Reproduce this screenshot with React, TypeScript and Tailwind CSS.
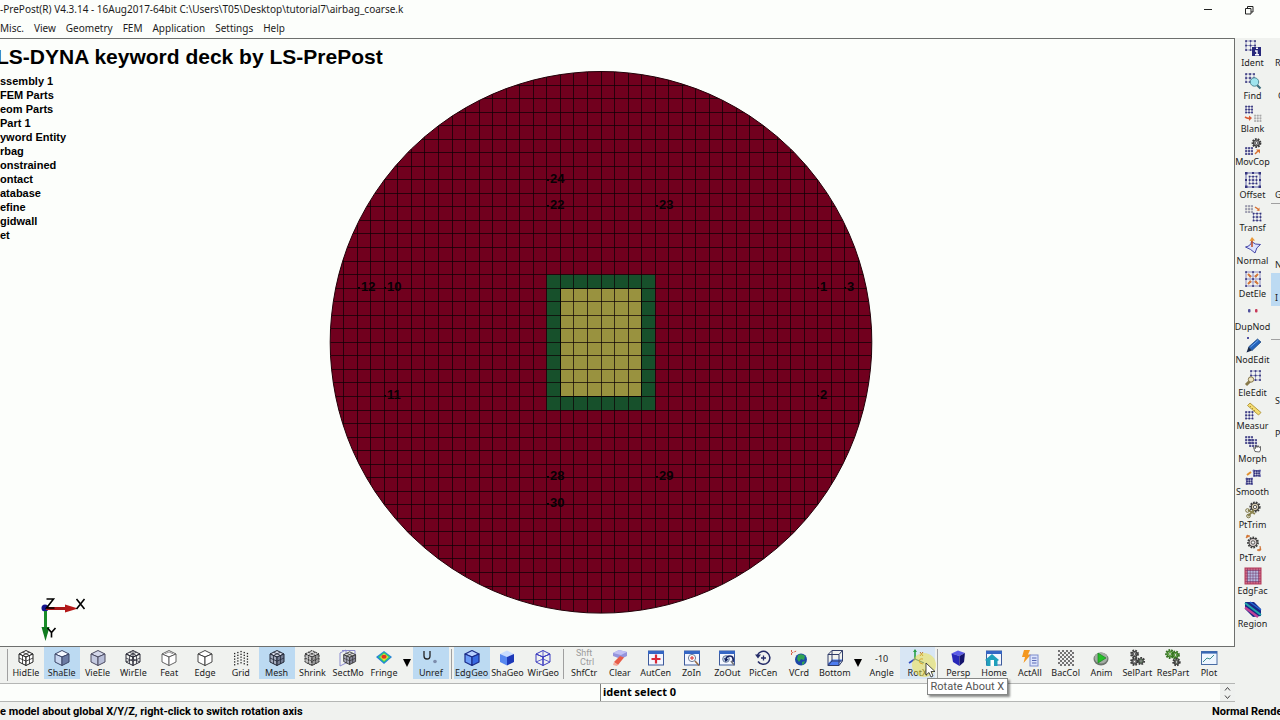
import React from "react";

type IconProps = { children: React.ReactNode };
const Ico = ({ children }: IconProps) => (
  <svg viewBox="0 0 18 18" className="h-[18px] w-[18px] shrink-0" fill="none" aria-hidden="true">
    {children}
  </svg>
);

/* ---------- shared glyphs ---------- */

type CubeProps = { top?: string; left?: string; right?: string; line?: string; grid?: boolean; hidden?: boolean; dash?: string; w?: number };
const Cube = ({ top = "none", left = "none", right = "none", line = "#333", grid, hidden, dash, w = 1 }: CubeProps) => (
  <g stroke={line} strokeWidth={w} strokeLinejoin="round" strokeDasharray={dash}>
    <path d="M2 5L9 1.5L16 5L9 8Z" fill={top} />
    <path d="M2 5L9 8V16.5L2 13Z" fill={left} />
    <path d="M16 5L9 8V16.5L16 13Z" fill={right} />
    {grid && (
      <path d="M5.500 3.200L12.500 6.500V15M12.500 3.200L5.500 6.500V15M2 9L9 12.200L16 9" strokeWidth={w * 0.8} />
    )}
    {hidden && <path d="M9 1.5V10M9 10L2 13M9 10L16 13" strokeWidth={w * 0.8} />}
  </g>
);

type GridProps = { x: number; y: number; s: number; n?: number; line?: string; dot?: string };
const NodeGrid = ({ x, y, s, n = 2, line = "#8484b8", dot = "#34347c" }: GridProps) => {
  const ks = Array.from({ length: n + 1 }, (_, i) => (i * s) / n);
  return (
    <g>
      {ks.map((k) => (
        <path key={k} d={`M${x + k} ${y}v${s}M${x} ${y + k}h${s}`} stroke={line} strokeWidth="0.8" />
      ))}
      {ks.map((a) => ks.map((b) => <rect key={`${a}-${b}`} x={x + a - 0.8} y={y + b - 0.8} width="1.7" height="1.7" fill={dot} />))}
    </g>
  );
};

const Gear = ({ x, y, r, c = "#3c3c3c", f = "#aaa" }: { x: number; y: number; r: number; c?: string; f?: string }) => (
  <g>
    <circle cx={x} cy={y} r={r} stroke={c} strokeWidth="1.8" strokeDasharray="1.7 1.1" />
    <circle cx={x} cy={y} r={r - 1} fill={f} stroke={c} strokeWidth="1.1" />
    <circle cx={x} cy={y} r={r * 0.35} fill="#f4f4f4" stroke={c} strokeWidth="0.8" />
  </g>
);

const Arrow = ({ d }: { d: string }) => <path d={d} fill="#e07a2c" stroke="#c05818" strokeWidth="0.5" />;

const Win = ({ children }: IconProps) => (
  <Ico>
    <rect x="1.5" y="2" width="15" height="14" fill="#f4f7ff" stroke="#3c5a9c" />
    <path d="M1 3.5h16" stroke="#3566c4" strokeWidth="3" />
    {children}
  </Ico>
);

/* ---------- right-hand tools ---------- */

const sideTools: { name: string; icon: React.ReactNode }[] = [
  { name: "Ident", icon: <Ico><NodeGrid x={2} y={2} s={9} /><rect x="8" y="8" width="9" height="9" fill="#28287c" /><path d="M12 9.300h2M11 12h2v3.500M11 15.700h4" stroke="#fff" strokeWidth="1.4" /></Ico> },
  { name: "Find", icon: <Ico><NodeGrid x={2} y={2} s={8} /><path d="M13 13l3.5 3.5" stroke="#3d6d7d" strokeWidth="2.2" /><circle cx="10.500" cy="10" r="4.200" fill="#9fe4ee" stroke="#548b98" /></Ico> },
  { name: "Blank", icon: <Ico><NodeGrid x={2} y={1.500} s={6} /><path d="M1 12q3 2 5 1" stroke="#d85830" strokeWidth="1.600" /><path d="M5 10.500l3 2.500-3 3z" fill="#d85830" /><NodeGrid x={11} y={10.500} s={5.500} line="#ccc" dot="#aaa" /></Ico> },
  { name: "MovCop", icon: <Ico><Gear x={12.5} y={5} r={4} /><NodeGrid x={2} y={10} s={6} /><path d="M11 16l3-3" stroke="#d87030" strokeWidth="1.500" /><path d="M12 11.500h4v4z" fill="#d87030" /></Ico> },
  { name: "Offset", icon: <Ico><rect x="2" y="2" width="14" height="14" stroke="#5f62aa" /><NodeGrid x={5.5} y={5.5} s={7} /><g fill="#34347e"><path d="M1 1h2.500v2.500H1zM14.500 1H17v2.500h-2.500zM1 14.500h2.500V17H1zM14.500 14.500H17V17h-2.500zM8 1h2v2H8zM8 15h2v2H8zM1 8h2v2H1zM15 8h2v2h-2z" /></g></Ico> },
  { name: "Transf", icon: <Ico><NodeGrid x={2} y={2} s={6} line="#bbb" dot="#9090a8" /><path d="M11 3l3 2" stroke="#d87030" strokeWidth="1.500" /><path d="M12.500 6.500l3-3v3.500z" fill="#d87030" /><NodeGrid x={9.5} y={9.5} s={7} /></Ico> },
  { name: "Normal", icon: <Ico><path d="M1.500 10Q7 9 7.500 4.500Q11 8 16.500 7.500Q12 10 11 16Q7 12 1.500 10Z" fill="#dbe1ff" stroke="#4545a8" /><path d="M8 10V3" stroke="#c04820" strokeWidth="1.500" /><path d="M5.500 4L8 0l3 3.500z" fill="#e89838" /></Ico> },
  { name: "DetEle", icon: <Ico><NodeGrid x={2} y={2} s={14} n={2} line="#7474b8" /><NodeGrid x={6} y={6} s={6} n={1} line="#a8a8d0" /><path d="M7 7L4 4M11 7l3-3M7 11l-3 3M11 11l3 3" stroke="#d87838" strokeWidth="2" /></Ico> },
  { name: "DupNod", icon: <Ico><rect x="4" y="6" width="2.500" height="3.500" rx="1" fill="#50509c" /><rect x="11" y="6" width="2.500" height="3.500" rx="1" fill="#c83858" /></Ico> },
  { name: "NodEdit", icon: <Ico><rect x="3" y="1" width="2" height="2" fill="#5050a0" /><path d="M4.500 11L13.500 3l3.500 3L8 14.500Z" fill="#2464bc" stroke="#174078" strokeWidth="0.7" /><path d="M4.500 11L8 14.500l-5.500 2z" fill="#182848" /><path d="M6.500 11l8-7" stroke="#6ca6ec" /></Ico> },
  { name: "EleEdit", icon: <Ico><NodeGrid x={7} y={2} s={9} /><path d="M2 16l4-4" stroke="#88794a" strokeWidth="3" /><circle cx="7" cy="10.500" r="2.700" fill="#eee4c0" stroke="#85754a" /></Ico> },
  { name: "Measur", icon: <Ico><path d="M3.500 3.500L6 1l11 9.500-2.500 2.500Z" fill="#f4dc70" stroke="#a48828" strokeWidth="0.8" /><path d="M6 5l1-1M8 7l1-1M10 9l1-1" stroke="#98802c" strokeWidth="0.8" /><NodeGrid x={2} y={10} s={6.5} /></Ico> },
  { name: "Morph", icon: <Ico><NodeGrid x={2} y={2} s={6} /><NodeGrid x={6} y={5} s={6} /><path d="M11 16.500l-1.500-4 2 1v-3l1.500 2 1-2 1 2 1.500-1v3.500l-1 2z" fill="#fff" stroke="#444" strokeWidth="0.8" /></Ico> },
  { name: "Smooth", icon: <Ico><path d="M9 2q4 1.500 7.500 0q-1.500 3 0 6.500q-3-1.500-7 0q1-3-.5-6.500zM2 10q3 1.500 6.500 0q-1.500 3 0 6.500q-3-1.500-6.500 0q1-3 0-6.500z" stroke="#6666ac" /><NodeGrid x={10.500} y={3} s={4.5} /><NodeGrid x={3} y={11} s={4.5} /><path d="M3 7l4-3" stroke="#e09030" strokeWidth="2" /></Ico> },
  { name: "PtTrim", icon: <Ico><Gear x={11} y={6} r={4.7} f="#d8ccb0" /><path d="M10 9l-6 6M4 9l7 4" stroke="#8c8550" strokeWidth="1.800" /><circle cx="3.500" cy="9.500" r="1.800" stroke="#7a7340" /><circle cx="4.500" cy="15" r="1.800" stroke="#7a7340" /></Ico> },
  { name: "PtTrav", icon: <Ico><Gear x={9} y={8.5} r={5} f="#d8d0d0" /><Arrow d="M2 4l1-3 3 1-2 1z" /><Arrow d="M13 16l3-1v-3l1 4-2 1z" /></Ico> },
  { name: "EdgFac", icon: <Ico><rect x="1" y="1" width="16" height="16" fill="#cf6884" /><rect x="3.500" y="3.500" width="11" height="11" fill="#b6bbdf" /><path d="M1 3.500h16M1 6.200h16M1 9h16M1 11.800h16M1 14.500h16M3.500 1v16M6.200 1v16M9 1v16M11.800 1v16M14.500 1v16" stroke="#6c2c60" strokeWidth="0.5" /><rect x="1" y="1" width="16" height="16" stroke="#b43858" /></Ico> },
  { name: "Region", icon: <Ico><path d="M1 2h9l7 7v7l-8 1-8-8z" fill="#172887" /><path d="M1 3l16 12" stroke="#20a8a8" strokeWidth="2" /><path d="M1 7.500L14 17" stroke="#c04098" strokeWidth="2.200" /><path d="M6 2l11 8" stroke="#2468d4" strokeWidth="1.500" /></Ico> },
];

type Slot = { text?: string; rule?: boolean; on?: boolean; far?: boolean };
const edgeSlots: Slot[] = [
  { text: "R" }, { text: "C", far: true }, {}, {}, { text: "G" },
  { rule: true }, {}, { text: "N" }, { text: "I", on: true }, {}, { rule: true }, {}, { text: "S" }, { text: "P" },
];

/* ---------- bottom toolbar ---------- */

type Tool = { name: string; icon: React.ReactNode; on?: boolean; hot?: boolean };
type Entry = Tool | "drop" | "sep";

const tools: Entry[] = [
  { name: "HidEle", icon: <Ico><Cube top="#fff" left="#fff" right="#fff" grid line="#222" /></Ico> },
  { name: "ShaEle", on: true, icon: <Ico><Cube top="#f4f8ff" left="#c8d6f0" right="#6c7ba4" line="#3c4668" /></Ico> },
  { name: "VieEle", icon: <Ico><Cube top="#d4d8ea" left="#c4cae0" right="#b8bed8" line="#4c4c62" /></Ico> },
  { name: "WirEle", icon: <Ico><Cube grid hidden line="#2c2c38" /></Ico> },
  { name: "Feat", icon: <Ico><Cube top="#fff" left="#fff" right="#fff" line="#555" w={0.9} /><path d="M5 4.800l4-1.800 4 1.800" stroke="#777" strokeWidth="0.8" /></Ico> },
  { name: "Edge", icon: <Ico><Cube top="#fff" left="#fff" right="#fff" line="#333" w={0.9} /></Ico> },
  { name: "Grid", icon: <Ico>{Array.from({ length: 25 }, (_, i) => <rect key={i} x={2 + (i % 5) * 3.2} y={2.5 + Math.floor(i / 5) * 2.8 + [1.4, 0.4, -0.6, 0.4, 1.4][i % 5]} width="1.300" height="1.300" fill="#222" />)}</Ico> },
  { name: "Mesh", on: true, icon: <Ico><Cube top="#d8dce8" left="#a4acbe" right="#747c92" grid line="#222838" /></Ico> },
  { name: "Shrink", icon: <Ico><Cube top="#d6d6d6" left="#c0c0c0" right="#999" grid dash="2.200 0.7" line="#2c2c2c" /></Ico> },
  { name: "SectMo", icon: <Ico><path d="M1 4l6-3v13l-6 3zM3 1.500h13v10" stroke="#8c8cd0" /><g transform="translate(3 1.500) scale(.85)"><Cube top="#ddd" left="#aab" right="#889" grid line="#333" /></g></Ico> },
  { name: "Fringe", icon: <Ico><path d="M1 8l8-6 8 6-8 7z" fill="#2480dc" /><path d="M3 8l6-5 6.500 5L9 13.500z" fill="#34d06c" /><path d="M5 8l4-3.500L13.500 8 9 12z" fill="#f0e030" /><ellipse cx="9" cy="7.700" rx="2.600" ry="2" fill="#e03820" /></Ico> },
  "drop",
  { name: "Unref", on: true, icon: <Ico><path d="M2 2v5q0 3 3 3t3-3V2" stroke="#222" strokeWidth="1.300" /><circle cx="13" cy="12.500" r="1.800" fill="#7c8cac" /></Ico> },
  "sep",
  { name: "EdgGeo", on: true, icon: <Ico><Cube top="#b8d0ff" left="#6c9cf8" right="#3868e0" line="#1c2c88" w={1.2} /></Ico> },
  { name: "ShaGeo", icon: <Ico><Cube top="#c8dcff" left="#5888f0" right="#1c38b8" line="none" /></Ico> },
  { name: "WirGeo", icon: <Ico><Cube hidden line="#3c3cc0" /></Ico> },
  "sep",
  { name: "ShfCtr", icon: <span className="flex h-[18px] w-5 flex-col font-['Roboto',sans-serif] text-[9px] leading-[9px] text-[#9c9c9c]"><span>Shft</span><span className="text-right">Ctrl</span></span> },
  { name: "Clear", icon: <Ico><path d="M2 4l6-3 8 2v4l-6 3-8-3z" fill="#9494dc" /><path d="M2 4l6-3 8 2-6 3z" fill="#c0c0f4" /><path d="M3 13l6-6 4 1.500-6 7.500z" fill="#e85c48" /><path d="M3 13l4 3-1 1-4-1z" fill="#f4a898" /></Ico> },
  { name: "AutCen", icon: <Win><path d="M9 5.500v9M4.500 10h9" stroke="#d82838" strokeWidth="2.200" /></Win> },
  { name: "ZoIn", icon: <Win><circle cx="9" cy="9" r="3.600" fill="#fff" stroke="#6c7c98" /><path d="M9 7v4M7 9h4" stroke="#d82828" /><path d="M12 12l4 4.500" stroke="#986c44" strokeWidth="1.600" /></Win> },
  { name: "ZoOut", icon: <Win><circle cx="8" cy="10" r="3.300" fill="#c8dcf0" stroke="#6c7c98" /><path d="M8 11q0-4 4-4t3 6" stroke="#142060" strokeWidth="1.700" /><path d="M6 9l1.500 4 3-2.500z" fill="#142060" /><path d="M13 12l3 4" stroke="#777" strokeWidth="1.500" /></Win> },
  { name: "PicCen", icon: <Ico><path d="M3.500 6a6.500 6.500 0 1 1 .5 6.500" stroke="#242c68" strokeWidth="1.500" /><path d="M1 5.500h6L4 9.500z" fill="#242c68" /><path d="M9.500 6.500v5M7 9h5" stroke="#242c68" strokeWidth="1.300" /></Ico> },
  { name: "VCrd", icon: <Ico><path d="M1.500 1v5M1.500 4l5-2" stroke="#d86048" strokeWidth="1" strokeDasharray="2 1" /><circle cx="11" cy="10.500" r="6" fill="#1c48a8" /><path d="M8 6q4-2 7 1l-1 4-3-1-2 3-2-3zM12 13l3-1-1 3-2 1z" fill="#30a454" /></Ico> },
  { name: "Bottom", icon: <Ico><path d="M2 14.500l4-4h10.500L13 14.500v2H2z" fill="#4c7cf0" /><path d="M2 5.500h11v11H2zM2 5.500L6 1.500h10.500L13 5.500M16.500 1.500V12L13 16.500M6 1.500V12h10M6 12l-4 4.500" stroke="#303c68" /></Ico> },
  "drop",
  { name: "Angle", icon: <span className="flex h-[18px] items-center">-10</span> },
  { name: "RotX", hot: true, icon: <Ico><path d="M7 10V1" stroke="#28a048" strokeWidth="1.600" /><path d="M7 10l-6 4" stroke="#2c48c0" strokeWidth="1.600" /><path d="M7 10l9 4" stroke="#2c6c98" strokeWidth="1.300" /><path d="M5 3l2-3 2 3z" fill="#28a048" /><path d="M12 3l3 4M15 3l-3 4M15 10q-5-1-3 4l3 1" stroke="#b87028" /></Ico> },
  "sep",
  { name: "Persp", icon: <Ico><path d="M2.500 4.500L9 1.500l7 2.500-5.500 3z" fill="#5c5ce8" /><path d="M2.500 4.500l8 2.500v10L4 13z" fill="#2828b8" /><path d="M10.500 7L16 4l-1 9-4.500 4z" fill="#14146c" /></Ico> },
  { name: "Home", icon: <Win><path d="M0 11l7-6 7 6-1.500 1v5h-11v-5z" fill="#20a0bc" /><path d="M5.500 11h3.500v6H5.500z" fill="#fff" /></Win> },
  { name: "ActAll", icon: <Ico><path d="M3 1h6L7 5.500h3L2.500 14l1.500-6H1z" fill="#f49820" /><rect x="9" y="6" width="8" height="11" fill="#dce4fc" stroke="#7c8ccc" /><path d="M11 9h4.500M11 11.500h4.500M11 14h4.500" stroke="#5868b4" /></Ico> },
  { name: "BacCol", icon: <Ico>{Array.from({ length: 64 }, (_, i) => <rect key={i} x={1 + (i % 8) * 2} y={1 + Math.floor(i / 8) * 2} width="2" height="2" fill={(i + Math.floor(i / 8)) % 2 ? "#eee" : "#737373"} />)}</Ico> },
  { name: "Anim", icon: <Ico><ellipse cx="9" cy="10" rx="7.500" ry="6.500" fill="#6d746d" /><ellipse cx="9" cy="9" rx="6.500" ry="5.500" fill="#a4aca4" /><path d="M6 4l8 5-8 5z" fill="#24c028" stroke="#188820" strokeWidth="0.7" /></Ico> },
  { name: "SelPart", icon: <Ico><Gear x={6.5} y={5} r={3.5} /><Gear x={6.5} y={12.5} r={3.5} /><Gear x={13} y={12} r={3.2} f="#8cc88c" /></Ico> },
  { name: "ResPart", icon: <Ico><Gear x={6} y={5} r={4} c="#387424" f="#8cd068" /><Gear x={11.5} y={6} r={3.5} c="#387424" f="#8cd068" /><Gear x={12.5} y={13} r={3.3} f="#9cb494" /></Ico> },
  { name: "Plot", icon: <Ico><rect x="1.500" y="2.500" width="15.500" height="13" fill="#eef6ff" stroke="#486ca4" /><path d="M1.500 3.500h15.500" stroke="#3868b4" strokeWidth="2.200" /><path d="M3 13l4-4 3 1 4-4" stroke="#409090" /></Ico> },
];

/* ---------- model view ---------- */

const CX = 601;
const CY = 342.3;
const R = 270.8;
const STEP = 13.54;
const lines = Array.from({ length: 39 }, (_, i) => (i - 19) * STEP);
const snap = (v: number) => Math.floor(v) + 0.5;

const rim = (() => {
  const ks = Array.from({ length: 29 }, (_, i) => (i - 14) * STEP);
  const h = (k: number) => Math.sqrt(R * R - k * k);
  const pts = [
    ...ks.map((k) => [k, -h(k)]),
    ...ks.map((k) => [h(k), k]),
    ...[...ks].reverse().map((k) => [k, h(k)]),
    ...[...ks].reverse().map((k) => [-h(k), k]),
  ];
  return pts.map(([x, y]) => `${(CX + x).toFixed(1)},${(CY + y).toFixed(1)}`).join(" ");
})();

const nodes: [number, number, string][] = [
  [549, 183, "24"], [549, 209, "22"], [658, 209, "23"], [360, 291, "12"], [386, 291, "10"], [819, 291, "1"],
  [846, 291, "3"], [386, 399, "11"], [819, 399, "2"], [549, 480, "28"], [658, 480, "29"], [549, 507, "30"],
];

const Model = () => (
  <svg viewBox="0 39 1234 607" className="absolute inset-0 h-full w-full" role="img" aria-label="Airbag mesh">
    <defs>
      <clipPath id="disc"><polygon points={rim} /></clipPath>
    </defs>
    <polygon points={rim} fill="#71001e" />
    <rect x={CX - 4 * STEP} y={CY - 5 * STEP} width={8 * STEP} height={10 * STEP} fill="#17502b" />
    <rect x={CX - 3 * STEP} y={CY - 4 * STEP} width={6 * STEP} height={8 * STEP} fill="#99923f" />
    <g clipPath="url(#disc)" stroke="#0c0004" strokeOpacity="0.72" strokeWidth="1">
      {lines.map((k) => (
        <path key={k} d={`M${snap(CX + k)} ${CY - R}V${CY + R}M${CX - R} ${snap(CY + k)}H${CX + R}`} />
      ))}
    </g>
    <polygon points={rim} fill="none" stroke="#220008" strokeWidth="1" />
    <path
      d={`M${snap(CX - 3 * STEP)} ${snap(CY - 4 * STEP)}H${snap(CX + 3 * STEP)}V${snap(CY + 4 * STEP)}H${snap(CX - 3 * STEP)}Z`}
      fill="none"
      stroke="#050505"
    />
    <g className="font-['Liberation_Sans'] text-[13px] font-bold" fill="#080004">
      {nodes.map(([x, y, t]) => (
        <g key={t}>
          <rect x={x - 2} y={y - 4} width="2" height="2" />
          <text x={x + 1} y={y}>{t}</text>
        </g>
      ))}
    </g>
    <circle cx="45" cy="608" r="3.500" fill="#14148c" />
    <path d="M46 608.500h20" stroke="#a81818" strokeWidth="3" />
    <path d="M65 604.500l13 4-13 4z" fill="#b41818" />
    <path d="M45.500 611v18" stroke="#188c28" strokeWidth="3" />
    <path d="M41.500 627h8l-4 14z" fill="#107c20" />
    <g fill="none" stroke="#000" strokeWidth="1.600">
      <path d="M46.500 599h7l-7 9h8M76.500 599l8 10M84.500 599l-8 10M47.500 628l4 4.500 4-4.500M51.500 632.500v5" />
    </g>
  </svg>
);

const tree = ["ssembly 1", "FEM Parts", "eom Parts", "Part 1", "yword Entity", "rbag", "onstrained", "ontact", "atabase", "efine", "gidwall", "et"];
const menus = ["Misc.", "View", "Geometry", "FEM", "Application", "Settings", "Help"];

export default function App() {
  return (
    <div className="flex min-h-screen flex-col overflow-hidden bg-[#fcfefb] font-['Noto_Sans',sans-serif] text-[#1c1c1c]">
      <header className="flex h-[19px] items-center justify-between text-[10px]">
        <h1 className="whitespace-nowrap">-PrePost(R) V4.3.14 - 16Aug2017-64bit C:\Users\T05\Desktop\tutorial7\airbag_coarse.k</h1>
        <div className="flex gap-[31px] pr-[26px]">
          <button type="button" aria-label="Minimize">
            <svg viewBox="0 0 10 10" className="h-[10px] w-[10px]"><path d="M1 4.500h8" stroke="#222" /></svg>
          </button>
          <button type="button" aria-label="Restore">
            <svg viewBox="0 0 10 10" className="h-[10px] w-[10px]" fill="none" stroke="#222"><path d="M1.500 3.500h5.500v5.500H1.500zM3.500 3.500v-2H9V7H7" /></svg>
          </button>
        </div>
      </header>
      <nav className="flex h-[19px] items-center gap-[10px] text-[10px]">
        {menus.map((m) => (
          <button key={m} type="button">{m}</button>
        ))}
      </nav>

      <div className="flex flex-1">
        <div className="flex min-w-0 flex-1 flex-col bg-[#f0f2ef]">
          <main className="relative flex-1 border-t border-r border-b border-[#6d6f6d] bg-[#fcfefb] font-['Liberation_Sans',sans-serif] text-black">
            <Model />
            <div className="relative">
              <h2 className="-ml-1 pt-1.5 text-[21px] leading-[24px] font-bold">LS-DYNA keyword deck by LS-PrePost</h2>
              <ul className="pt-[5px] text-[11px] leading-[14px] font-bold">
                {tree.map((t) => (
                  <li key={t}>{t}</li>
                ))}
              </ul>
            </div>
          </main>

          <div role="toolbar" aria-label="View tools" className="flex h-[37px] border-b border-[#b4b6b4] pr-2 pl-[7px] text-[9px] leading-[11px]">
            <span className="my-0.5 w-px bg-[#a0a0a0]" />
            {tools.map((t, i) =>
              t === "sep" ? (
                <span key={i} className="mt-0.5 mb-1 flex w-[5px] justify-center"><span className="w-px bg-[#a0a0a0]" /></span>
              ) : t === "drop" ? (
                <button key={i} type="button" aria-label="More" className="flex h-8 w-[11px] items-center justify-center">
                  <svg viewBox="0 0 8 8" className="h-2 w-2"><path d="M0 0h8L4 8z" fill="#000" /></svg>
                </button>
              ) : (
                <button
                  key={i}
                  type="button"
                  className={`relative flex h-8 min-w-0 flex-1 basis-0 flex-col items-center pt-0.5 whitespace-nowrap ${t.on ? "bg-[#bcdaf2]" : t.hot ? "bg-[#d8e6f4]" : ""}`}
                >
                  {t.icon}
                  <span>{t.name}</span>
                  {t.hot && (
                    <span className="pointer-events-none absolute top-0.5 left-2 z-10">
                      <svg viewBox="0 0 30 30" className="h-[30px] w-[30px]">
                        <circle cx="16" cy="16" r="12" fill="#f2e23c" opacity="0.5" />
                        <path d="M18 14v12l3-2.500 2 4.500 2-1-2-4.500h4z" fill="#fff" stroke="#222" strokeWidth="0.8" />
                      </svg>
                    </span>
                  )}
                  {t.hot && (
                    <span role="tooltip" className="absolute top-[31px] left-[27px] z-20 border border-[#868886] bg-white px-[3px] font-['Roboto',sans-serif] text-[11px] leading-[15px] text-[#555] shadow-[2px_2px_2px_rgba(0,0,0,0.45)]">
                      Rotate About X
                    </span>
                  )}
                </button>
              ),
            )}
          </div>

          <div className="flex h-[18px] border-b border-[#b4b6b4] bg-[#fcfefb] text-[11px] font-bold text-black">
            <output className="block w-[601px] border-r border-[#7c7e7c]" />
            <input aria-label="Command" defaultValue="ident select 0" className="min-w-0 flex-1 bg-transparent px-0.5 outline-none" />
            <div className="flex w-[15px] flex-col items-center justify-center gap-1 bg-[#eff1ef]">
              <button type="button" aria-label="Previous" className="block">
                <svg viewBox="0 0 7 4" className="h-1 w-[7px]" fill="none" stroke="#444"><path d="M1 3.500l2.500-3 2.500 3" /></svg>
              </button>
              <button type="button" aria-label="Next" className="block">
                <svg viewBox="0 0 7 4" className="h-1 w-[7px]" fill="none" stroke="#444"><path d="M1 .5l2.500 3 2.500-3" /></svg>
              </button>
            </div>
          </div>
        </div>

        <aside className="flex w-[45px] shrink-0 overflow-hidden bg-[#f0f2ef] text-[9px] leading-[11px]">
          <div className="flex w-[35px] shrink-0 flex-col">
            {sideTools.map((t) => (
              <button key={t.name} type="button" className="flex h-[33px] flex-col items-center pt-px whitespace-nowrap">
                {t.icon}
                <span>{t.name}</span>
              </button>
            ))}
          </div>
          <div className="ml-px flex flex-1 flex-col">
            {edgeSlots.map((s, i) =>
              s.rule ? (
                <span key={i} className="h-1 border-t border-[#a0a0a0]" />
              ) : (
                <button key={i} type="button" tabIndex={-1} className={`flex h-[33px] items-end pb-[3px] ${s.far ? "pl-[7px]" : "pl-1"} ${s.on ? "bg-[#bcdaf2]" : ""}`}>
                  {s.text}
                </button>
              ),
            )}
          </div>
        </aside>
      </div>

      <footer className="flex h-[18px] items-center justify-between overflow-hidden bg-[#f0f2ef] pt-0.5 font-['Roboto',sans-serif] text-[11px] font-bold whitespace-nowrap text-black">
        <span>e model about global X/Y/Z, right-click to switch rotation axis</span>
        <span className="w-[68px] overflow-hidden">Normal Render</span>
      </footer>
    </div>
  );
}
